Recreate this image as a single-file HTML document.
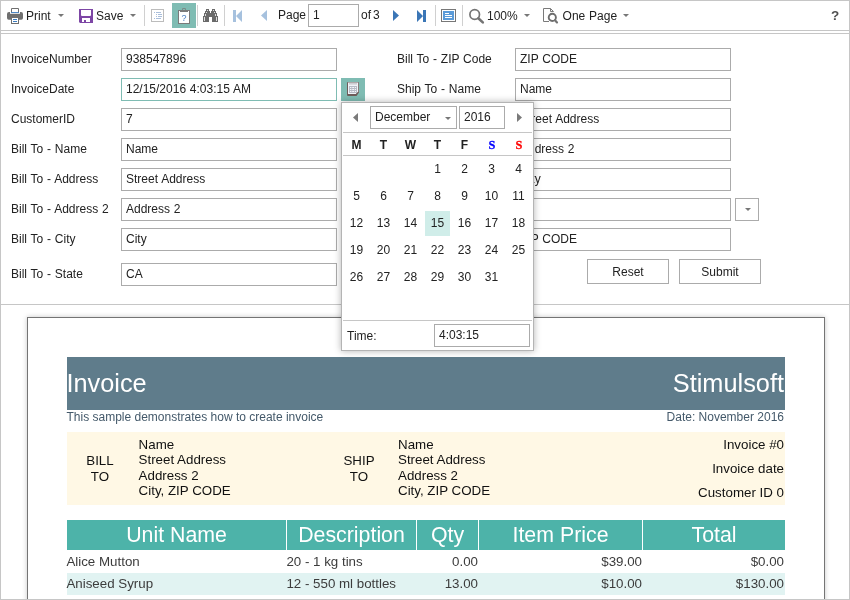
<!DOCTYPE html>
<html><head><meta charset="utf-8"><title>Invoice Viewer</title>
<style>
*{box-sizing:border-box;margin:0;padding:0}
html,body{width:850px;height:600px;overflow:hidden;background:#fff}
body{will-change:transform;word-spacing:0.45px;font-family:"Liberation Sans",Arial,sans-serif;font-size:12px;color:#222;position:relative}
.abs{position:absolute}
#frame{position:absolute;left:0;top:0;width:850px;height:600px;border:1px solid #c6c6c6;z-index:50;pointer-events:none}
.hl{position:absolute;left:0;width:850px;height:1px;background:#c6c6c6}
.t{position:absolute;white-space:nowrap;line-height:14px;height:14px}
.sep{position:absolute;top:5px;width:1px;height:21px;background:#d0d0d0}
.inp{position:absolute;height:23px;border:1px solid #ababab;background:#fff;padding:0 4px;line-height:21px;white-space:nowrap;overflow:hidden;color:#222}
.lbl{position:absolute;white-space:nowrap;line-height:14px;color:#222}
.btn{position:absolute;height:25px;border:1px solid #ababab;background:#fff;text-align:center;line-height:25px}
.arr{position:absolute;width:0;height:0;border-left:3px solid transparent;border-right:3px solid transparent;border-top:3px solid #777}
/* calendar */
#cal{position:absolute;left:341px;top:102px;width:193px;height:249px;background:#fff;border:1px solid #b4b4b4;box-shadow:0 0 7px rgba(0,0,0,.3);z-index:20}
#cal .c{position:absolute;width:27px;height:27px;line-height:27px;text-align:center;color:#222}
#cal .h{font-weight:bold}
/* report */
#page{position:absolute;left:27px;top:317px;width:798px;height:400px;border:1px solid #747474;background:#fff;box-shadow:0 0 5px rgba(0,0,0,.22)}
.r{position:absolute;word-spacing:0;white-space:nowrap;font-size:13.33px;line-height:15.33px;color:#111}
.th{position:absolute;word-spacing:0;top:520px;height:30px;background:#4db3a9;color:#fff;font-size:21.33px;line-height:30px;text-align:center;white-space:nowrap}
</style></head><body>
<div id="frame"></div>
<!-- toolbar -->
<div class="hl" style="top:30px"></div>
<div class="hl" style="top:33px"></div>
<div class="hl" style="top:304px"></div>

<div id="toolbar">
<svg class="abs" style="left:7px;top:8px" width="16" height="16" viewBox="0 0 16 16">
<path d="M0 6a2 2 0 0 1 2-2h1v1.7h10V4h1a2 2 0 0 1 2 2v4a1.7 1.7 0 0 1-1.7 1.7H1.7A1.7 1.7 0 0 1 0 10z" fill="#6f6f6f"/>
<path d="M4.5 4.4V0.5h7V4.4" fill="#fff" stroke="#6f6f6f"/>
<rect x="4" y="4" width="8" height="0.9" fill="#3b7bbf"/>
<rect x="4.5" y="9.5" width="7" height="6" fill="#fff" stroke="#6f6f6f"/>
<rect x="6" y="11" width="4" height="1" fill="#3b7bbf"/><rect x="6" y="13" width="4" height="1" fill="#3b7bbf"/>
</svg>
<div class="t" style="left:26px;top:9px">Print</div>
<div class="arr" style="left:58px;top:14px"></div>
<svg class="abs" style="left:79px;top:9px" width="14" height="14" viewBox="0 0 14 14">
<path d="M0 0h14v14H1L0 13z" fill="#7d46a5"/><path d="M2 1h10v5a1 1 0 0 1-1 1H3a1 1 0 0 1-1-1z" fill="#fff"/><rect x="3" y="9" width="8" height="4" fill="#fff"/><rect x="5" y="11" width="2" height="2" fill="#7d46a5"/>
</svg>
<div class="t" style="left:96px;top:9px">Save</div>
<div class="arr" style="left:130px;top:14px"></div>
<div class="sep" style="left:144px"></div>
<svg class="abs" style="left:151px;top:9px" width="13" height="13" viewBox="0 0 13 13">
<rect x="0.5" y="0.5" width="12" height="12" fill="#fff" stroke="#bcbcbc"/>
<g fill="#a9bedb"><rect x="3" y="3" width="1" height="1"/><rect x="5" y="3" width="5" height="1"/><rect x="5" y="5" width="1" height="1"/><rect x="7" y="5" width="4" height="1"/><rect x="5" y="7" width="1" height="1"/><rect x="7" y="7" width="4" height="1"/><rect x="3" y="9" width="1" height="1"/><rect x="5" y="9" width="5" height="1"/></g>
</svg>
<div class="abs" style="left:172px;top:3px;width:24px;height:25px;background:#7fbcb3"></div>
<svg class="abs" style="left:178px;top:8px" width="12" height="16" viewBox="0 0 12 16">
<rect x="0.5" y="2.5" width="11" height="13" fill="#fff" stroke="#7a7a7a"/>
<rect x="2" y="2" width="8" height="2" fill="#7a7a7a"/>
<path d="M4.5 2.5v-1a1.5 1.5 0 0 1 3 0v1" fill="none" stroke="#7a7a7a"/>
<text x="6" y="13" font-family="Liberation Sans,Arial,sans-serif" font-size="9" fill="#4a7fc1" text-anchor="middle">?</text>
</svg>
<div class="sep" style="left:197px"></div>
<svg class="abs" style="left:203px;top:9px" width="15" height="13" viewBox="0 0 15 13">
<path d="M3 0h3v2h1v2h1V2h1V0h3v2h1v2h1v3h1v6H9V8H6v5H0V7h1V4h1V2h1z" fill="#6a6a6a"/>
<rect x="1" y="8" width="1" height="4" fill="#ddd"/><rect x="13" y="8" width="1" height="4" fill="#ddd"/>
<rect x="4" y="1" width="1" height="1" fill="#ddd"/><rect x="10" y="1" width="1" height="1" fill="#ddd"/>
<rect x="3" y="3" width="1" height="1" fill="#ddd"/><rect x="11" y="3" width="1" height="1" fill="#ddd"/>
<rect x="2" y="5" width="1" height="2" fill="#ddd"/><rect x="12" y="5" width="1" height="2" fill="#ddd"/>
</svg>
<div class="sep" style="left:224px"></div>
<svg class="abs" style="left:233px;top:10px" width="9" height="12" viewBox="0 0 9 12"><path d="M0 0h3v12H0zM9 0v12L3 6z" fill="#a6c1de"/></svg>
<svg class="abs" style="left:261px;top:10px" width="6" height="11" viewBox="0 0 6 12" preserveAspectRatio="none"><path d="M6 0v12L0 6z" fill="#a6c1de"/></svg>
<div class="t" style="left:278px;top:8px">Page</div>
<div class="inp" style="left:308px;top:4px;width:51px;height:23px;line-height:21px">1</div>
<div class="t" style="left:361px;top:8px">of<span style="margin-left:2px">3</span></div>
<svg class="abs" style="left:393px;top:10px" width="6" height="11" viewBox="0 0 6 12" preserveAspectRatio="none"><path d="M0 0v12L6 6z" fill="#3b76b6"/></svg>
<svg class="abs" style="left:417px;top:10px" width="9" height="12" viewBox="0 0 9 12"><path d="M6 0h3v12H6zM0 0v12L6 6z" fill="#3b76b6"/></svg>
<div class="sep" style="left:435px"></div>
<svg class="abs" style="left:441px;top:9px" width="15" height="13" viewBox="0 0 15 13">
<rect x="0.5" y="0.5" width="14" height="12" fill="#fff" stroke="#777"/>
<rect x="2" y="2" width="11" height="9" fill="#5b9bd8"/>
<rect x="4" y="4" width="4" height="1" fill="#fff"/><rect x="4" y="6" width="7" height="1" fill="#fff"/><rect x="4" y="8" width="7" height="1" fill="#fff"/>
</svg>
<div class="sep" style="left:462px"></div>
<svg class="abs" style="left:468px;top:8px" width="18" height="18" viewBox="0 0 18 18">
<circle cx="6.7" cy="6.5" r="4.8" fill="none" stroke="#747474" stroke-width="1.7"/>
<path d="M10.3 10.3L14.8 14.4" stroke="#747474" stroke-width="2.6" stroke-linecap="round"/>
</svg>
<div class="t" style="left:487px;top:9px">100%</div>
<div class="arr" style="left:524px;top:14px"></div>
<svg class="abs" style="left:542px;top:7px" width="18" height="18" viewBox="0 0 18 18">
<path d="M7 14.5H1.5V1.5H8.5L11.5 4.5H8.5V1.5" fill="none" stroke="#7a7a7a" stroke-linejoin="miter"/>
<circle cx="10.3" cy="10.4" r="3.6" fill="#fff" stroke="#6e6e6e" stroke-width="1.9"/>
<path d="M13 13.2L15 15.4" stroke="#747474" stroke-width="2.2" stroke-linecap="round"/>
</svg>
<div class="t" style="left:562.6px;top:9px">One Page</div>
<div class="arr" style="left:623px;top:14px"></div>
<div class="t" style="left:831px;top:9px;font-weight:bold;font-size:13.5px;color:#505050">?</div>
</div>

<!-- form -->
<div id="form">
<div class="lbl" style="left:11px;top:52px">InvoiceNumber</div><div class="inp" style="left:121px;top:48px;width:216px">938547896</div>
<div class="lbl" style="left:11px;top:82px">InvoiceDate</div><div class="inp" style="left:121px;top:78px;width:216px;border-color:#7fbcb3">12/15/2016 4:03:15 AM</div>
<div class="lbl" style="left:11px;top:112px">CustomerID</div><div class="inp" style="left:121px;top:108px;width:216px">7</div>
<div class="lbl" style="left:11px;top:142px">Bill To - Name</div><div class="inp" style="left:121px;top:138px;width:216px">Name</div>
<div class="lbl" style="left:11px;top:172px">Bill To - Address</div><div class="inp" style="left:121px;top:168px;width:216px">Street Address</div>
<div class="lbl" style="left:11px;top:202px">Bill To - Address 2</div><div class="inp" style="left:121px;top:198px;width:216px">Address 2</div>
<div class="lbl" style="left:11px;top:232px">Bill To - City</div><div class="inp" style="left:121px;top:228px;width:216px">City</div>
<div class="lbl" style="left:11px;top:267px">Bill To - State</div><div class="inp" style="left:121px;top:263px;width:216px">CA</div>
<div class="abs" style="left:341px;top:78px;width:24px;height:23px;background:#7fbcb3"></div>
<svg class="abs" style="left:347px;top:82px" width="12" height="14" viewBox="0 0 12 14">
<path d="M1 0h10a1 1 0 0 1 1 1v9.5L9.5 14H1a1 1 0 0 1-1-1V1a1 1 0 0 1 1-1z" fill="#6e5c5a"/>
<path d="M1 0.6h10.2v9.6H9.2v1.8H1z" fill="#f0f2f8"/>
<rect x="2" y="1" width="8" height="1.6" fill="#cdcdd2"/>
<rect x="2" y="4" width="8" height="7" fill="#b7bbc5"/>
<g fill="#f4f5fa"><rect x="3" y="5" width="1.4" height="1"/><rect x="5.2" y="5" width="1.8" height="1"/><rect x="7.8" y="5" width="1.2" height="1"/><rect x="3" y="7" width="1.4" height="1"/><rect x="5.2" y="7" width="1.8" height="1"/><rect x="7.8" y="7" width="1.2" height="1"/><rect x="3" y="9" width="1.4" height="1"/><rect x="5.2" y="9" width="1.8" height="1"/><rect x="7.8" y="9" width="1.2" height="1"/></g>
</svg>

<div class="lbl" style="left:397px;top:52px">Bill To - ZIP Code</div><div class="inp" style="left:515px;top:48px;width:216px">ZIP CODE</div>
<div class="lbl" style="left:397px;top:82px">Ship To - Name</div><div class="inp" style="left:515px;top:78px;width:216px">Name</div>
<div class="inp" style="left:515px;top:108px;width:216px">Street Address</div>
<div class="inp" style="left:515px;top:138px;width:216px">Address 2</div>
<div class="inp" style="left:515px;top:168px;width:216px">City</div>
<div class="inp" style="left:515px;top:198px;width:216px"></div>
<div class="inp" style="left:735px;top:198px;width:24px"></div><div class="arr" style="left:744.6px;top:208px"></div>
<div class="inp" style="left:515px;top:228px;width:216px">ZIP CODE</div>
<div class="btn" style="left:587px;top:259px;width:82px">Reset</div>
<div class="btn" style="left:679px;top:259px;width:82px">Submit</div>
</div>

<!-- calendar -->
<div id="cal">
<svg class="abs" style="left:11.1px;top:10px" width="5" height="9" viewBox="0 0 6 10" preserveAspectRatio="none"><path d="M6 0v10L0 5z" fill="#7a7a7a"/></svg>
<div class="inp" style="left:28px;top:3px;width:87px">December</div><div class="arr" style="left:103px;top:14px"></div>
<div class="inp" style="left:117px;top:3px;width:46px">2016</div>
<svg class="abs" style="left:174.9px;top:10px" width="5" height="9" viewBox="0 0 6 10" preserveAspectRatio="none"><path d="M0 0v10L6 5z" fill="#7a7a7a"/></svg>
<div class="abs" style="left:1px;top:29px;width:189px;height:1px;background:#c6c6c6"></div>
<div class="abs" style="left:1px;top:52px;width:189px;height:1px;background:#c6c6c6"></div>
<div class="abs" style="left:1px;top:217px;width:189px;height:1px;background:#c6c6c6"></div>
<div class="c h" style="left:1px;top:29px">M</div>
<div class="c h" style="left:28px;top:29px">T</div>
<div class="c h" style="left:55px;top:29px">W</div>
<div class="c h" style="left:82px;top:29px">T</div>
<div class="c h" style="left:109px;top:29px">F</div>
<div class="c h" style="left:136px;top:29px;color:#0000ff;font-family:'Liberation Serif',serif;font-size:14px;-webkit-text-stroke:0.35px;transform:translateX(0.5px) scale(0.88)">S</div>
<div class="c h" style="left:163px;top:29px;color:#ff0000;font-family:'Liberation Serif',serif;font-size:14px;-webkit-text-stroke:0.35px;transform:translateX(0.5px) scale(0.88)">S</div>
<div class="c" style="left:82px;top:53px">1</div>
<div class="c" style="left:109px;top:53px">2</div>
<div class="c" style="left:136px;top:53px">3</div>
<div class="c" style="left:163px;top:53px">4</div>
<div class="c" style="left:1px;top:80px">5</div>
<div class="c" style="left:28px;top:80px">6</div>
<div class="c" style="left:55px;top:80px">7</div>
<div class="c" style="left:82px;top:80px">8</div>
<div class="c" style="left:109px;top:80px">9</div>
<div class="c" style="left:136px;top:80px">10</div>
<div class="c" style="left:163px;top:80px">11</div>
<div class="c" style="left:1px;top:107px">12</div>
<div class="c" style="left:28px;top:107px">13</div>
<div class="c" style="left:55px;top:107px">14</div>
<div class="abs" style="left:83px;top:108px;width:25px;height:25px;background:#d0ede9"></div>
<div class="c" style="left:82px;top:107px">15</div>
<div class="c" style="left:109px;top:107px">16</div>
<div class="c" style="left:136px;top:107px">17</div>
<div class="c" style="left:163px;top:107px">18</div>
<div class="c" style="left:1px;top:134px">19</div>
<div class="c" style="left:28px;top:134px">20</div>
<div class="c" style="left:55px;top:134px">21</div>
<div class="c" style="left:82px;top:134px">22</div>
<div class="c" style="left:109px;top:134px">23</div>
<div class="c" style="left:136px;top:134px">24</div>
<div class="c" style="left:163px;top:134px">25</div>
<div class="c" style="left:1px;top:161px">26</div>
<div class="c" style="left:28px;top:161px">27</div>
<div class="c" style="left:55px;top:161px">28</div>
<div class="c" style="left:82px;top:161px">29</div>
<div class="c" style="left:109px;top:161px">30</div>
<div class="c" style="left:136px;top:161px">31</div>
<div class="lbl" style="left:5px;top:226px">Time:</div>
<div class="inp" style="left:92px;top:221px;width:96px">4:03:15</div>
</div>

<!-- report -->
<div id="page"></div>
<div class="abs" style="left:67px;top:357px;width:718px;height:53px;background:#5f7c8b"></div>
<div class="r" style="left:66.4px;top:369px;font-size:25.33px;line-height:29px;color:#fff">Invoice</div>
<div class="r" style="right:66px;top:369px;font-size:25.33px;line-height:29px;color:#fff">Stimulsoft</div>
<div class="r" style="left:66.5px;top:409.5px;font-size:12px;line-height:14px;color:#44596a">This sample demonstrates how to create invoice</div>
<div class="r" style="right:66px;top:409.5px;font-size:12px;line-height:14px;color:#44596a">Date: November 2016</div>
<div class="abs" style="left:67px;top:432px;width:718px;height:73px;background:#fff8e5"></div>

<div class="th" style="left:67px;width:219px">Unit Name</div>
<div class="th" style="left:287px;width:129px">Description</div>
<div class="th" style="left:417px;width:61px">Qty</div>
<div class="th" style="left:479px;width:163px">Item Price</div>
<div class="th" style="left:643px;width:142px">Total</div>
<div class="abs" style="left:67px;top:573px;width:718px;height:22px;background:#e1f3f2"></div>
<div class="r" style="left:67px;top:453px;width:66px;text-align:center;line-height:16px">BILL<br>TO</div>
<div class="r" style="left:138.6px;top:437px">Name<br>Street Address<br>Address 2<br>City, ZIP CODE</div>
<div class="r" style="left:326px;top:453px;width:66px;text-align:center;line-height:16px">SHIP<br>TO</div>
<div class="r" style="left:398px;top:437px">Name<br>Street Address<br>Address 2<br>City, ZIP CODE</div>
<div class="r" style="right:66px;top:437px">Invoice #0</div>
<div class="r" style="right:66px;top:461px">Invoice date</div>
<div class="r" style="right:66px;top:485px">Customer ID 0</div>
<div class="r" style="left:66.4px;top:554px;color:#3c3c3c">Alice Mutton</div>
<div class="r" style="left:286.4px;top:554px;color:#3c3c3c">20 - 1 kg tins</div>
<div class="r" style="right:372px;top:554px;color:#3c3c3c">0.00</div>
<div class="r" style="right:208px;top:554px;color:#3c3c3c">$39.00</div>
<div class="r" style="right:66px;top:554px;color:#3c3c3c">$0.00</div>
<div class="r" style="left:66.4px;top:576px;color:#3c3c3c">Aniseed Syrup</div>
<div class="r" style="left:286.4px;top:576px;color:#3c3c3c">12 - 550 ml bottles</div>
<div class="r" style="right:372px;top:576px;color:#3c3c3c">13.00</div>
<div class="r" style="right:208px;top:576px;color:#3c3c3c">$10.00</div>
<div class="r" style="right:66px;top:576px;color:#3c3c3c">$130.00</div>
</body></html>
